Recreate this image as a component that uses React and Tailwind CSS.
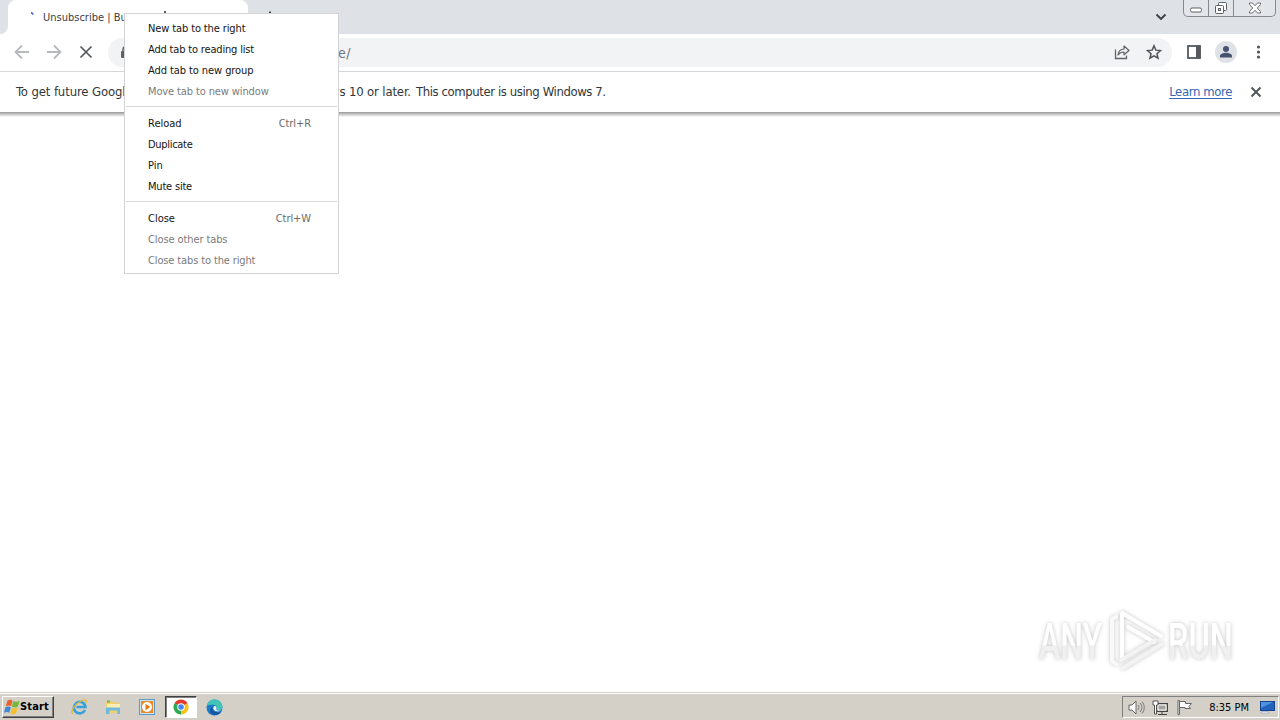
import React from 'react';

const MENU = [
  [
    { label: 'New tab to the right', cls: 'tracking-[-0.12px]' },
    { label: 'Add tab to reading list', cls: 'tracking-[-0.17px]' },
    { label: 'Add tab to new group', cls: 'tracking-[-0.08px]' },
    { label: 'Move tab to new window', cls: 'tracking-[-0.12px]', disabled: true },
  ],
  [
    { label: 'Reload', keys: 'Ctrl+R' },
    { label: 'Duplicate', cls: 'tracking-[-0.3px]' },
    { label: 'Pin' },
    { label: 'Mute site', cls: 'tracking-[-0.2px]' },
  ],
  [
    { label: 'Close', keys: 'Ctrl+W' },
    { label: 'Close other tabs', cls: 'tracking-[-0.1px]', disabled: true },
    { label: 'Close tabs to the right', cls: 'tracking-[-0.13px]', disabled: true },
  ],
];

function Icon({ children, size = 16, className = '' }) {
  return (
    <svg width={size} height={size} viewBox={`0 0 ${size} ${size}`} fill="none" className={`block shrink-0 ${className}`}>
      {children}
    </svg>
  );
}

function TabStrip() {
  return (
    <div className="flex h-[34px] bg-[#dee1e6]">
      <div className="flex h-full w-2 items-end">
        <svg width="8" height="8" className="block"><path d="M8 0v8H0a8 8 0 0 0 8-8z" fill="#fff" /></svg>
      </div>
      <div className="flex h-full w-[240px] items-center rounded-t-[8px] bg-white pl-[15px]">
        <svg width="16" height="16" className="block">
          <path d="M8 3.500a5 5 0 0 1 2.200 2" stroke="#4a62c8" strokeWidth="1.600" fill="none" />
        </svg>
        <span className="ml-1 w-[84px] shrink-0 pt-px text-[11px] leading-4 whitespace-nowrap text-[#3c4043]">Unsubscribe | Bu</span>
        <span className="-mt-[10px] ml-[37px] h-[2px] w-[2px] bg-[#5a5e62]" />
      </div>
      <div className="flex h-full w-2 items-end">
        <svg width="8" height="8" className="block"><path d="M0 0v8h8a8 8 0 0 1-8-8z" fill="#fff" /></svg>
      </div>
      <div className="flex h-full w-7 items-center justify-center">
        <svg width="14" height="14" className="block"><path d="M7 1.500v11M1.500 7h11" stroke="#3c4043" strokeWidth="2" /></svg>
      </div>
      <div className="ml-auto flex">
        <svg width="12" height="8" className="mt-[13px] mr-[16px] block">
          <path d="M1.500 1.500L6 6l4.500-4.500" stroke="#3c4043" strokeWidth="1.900" fill="none" />
        </svg>
        <div className="mr-[4px] flex h-[17px] rounded-b-[5px] border border-t-0 border-[#85888d] bg-[#e2e5e9]">
          <div className="flex w-[25px] items-center justify-center border-r border-[#85888d]">
            <svg width="14" height="16" className="block"><rect x="1.500" y="8" width="11" height="4" rx="1.500" fill="#fff" stroke="#5b5f66" /></svg>
          </div>
          <div className="flex w-[25px] items-center justify-center border-r border-[#85888d]">
            <svg width="14" height="16" className="block">
              <rect x="4.500" y="2.500" width="8" height="8" rx="1" fill="#fff" stroke="#5b5f66" />
              <rect x="1.500" y="5.500" width="8" height="8" rx="1" fill="#fff" stroke="#5b5f66" />
              <rect x="4.500" y="8.500" width="2" height="2" fill="#dee1e6" stroke="#5b5f66" />
            </svg>
          </div>
          <div className="flex w-[41px] items-center justify-center">
            <svg width="14" height="16" className="block">
              <path d="M1.500 3h3L7 5.700 9.500 3h3v1.500L9.300 8l3.200 3.500V13h-3L7 10.300 4.500 13h-3v-1.500L4.700 8 1.500 4.500z" fill="#fff" stroke="#5b5f66" strokeWidth=".9" />
            </svg>
          </div>
        </div>
      </div>
    </div>
  );
}

function Toolbar() {
  return (
    <div className="flex h-[38px] items-center border-b border-[#d5d7da] bg-white pb-px pl-[14px]">
      <Icon><path d="M15 8H2M8 1.500L1.500 8 8 14.500" stroke="#b7b9bc" strokeWidth="1.800" /></Icon>
      <Icon className="ml-4"><path d="M1 8h13M8 1.500L14.500 8 8 14.500" stroke="#b7b9bc" strokeWidth="1.800" /></Icon>
      <Icon className="ml-4"><path d="M2.500 2.500l11 11M13.500 2.500l-11 11" stroke="#55585c" strokeWidth="1.700" /></Icon>
      <div className="ml-[14px] flex h-[29px] w-[1064px] items-center rounded-full bg-[#f1f3f4] pl-[12px]">
        <Icon size={12}><rect x="1" y="5" width="10" height="7" rx="1" fill="#5f6368" /><path d="M3 6V3.500a3 3 0 0 1 6 0V6" stroke="#5f6368" strokeWidth="1.500" /></Icon>
        <span className="ml-[206px] pt-px text-[14px] leading-4 tracking-[0.4px] text-[#70757a]">e/</span>
        <Icon className="ml-auto">
          <path d="M1.500 5.500v9h11v-3" stroke="#5f6368" strokeWidth="1.300" />
          <path d="M4 11c.5-4 2.500-5.800 6-6V2l5 4.500-5 4.300V8C7.500 8 5.500 9 4 11z" stroke="#5f6368" strokeWidth="1.200" strokeLinejoin="round" />
        </Icon>
        <Icon className="mr-[10px] ml-4">
          <path d="M8 1.800l1.850 4.350 4.700.4-3.570 3.100 1.070 4.600L8 11.800l-4.050 2.450 1.070-4.600-3.570-3.100 4.700-.4z" stroke="#505459" strokeWidth="1.500" />
        </Icon>
      </div>
      <Icon className="ml-[14px]">
        <rect x="2" y="2" width="12" height="12" stroke="#55585c" strokeWidth="1.800" />
        <path d="M10 1.500H14.500v13H10z" fill="#55585c" />
      </Icon>
      <Icon size={22} className="ml-[13px]">
        <circle cx="11" cy="11" r="11" fill="#dee1e6" />
        <circle cx="11" cy="8" r="3" fill="#47536e" />
        <path d="M5 16.500v-1.700c0-2 4-3 6-3s6 1 6 3v1.700z" fill="#47536e" />
      </Icon>
      <Icon className="ml-[14px]">
        <circle cx="7.500" cy="3" r="1.600" fill="#505459" />
        <circle cx="7.500" cy="8" r="1.600" fill="#505459" />
        <circle cx="7.500" cy="13" r="1.600" fill="#505459" />
      </Icon>
    </div>
  );
}

function InfoBar() {
  return (
    <>
      <div className="flex h-[40px] items-center bg-white pl-4 text-[13px] leading-4 text-[#333639]">
        <span className="w-[110px] whitespace-nowrap tracking-[-0.12px]">To get future Googl</span>
        <span className="ml-[204px] w-[86px] whitespace-nowrap tracking-[-0.15px]">ws 10 or later.</span>
        <span className="whitespace-nowrap tracking-[-0.41px]">This computer is using Windows 7.</span>
        <span className="ml-auto whitespace-nowrap tracking-[-0.38px] text-[#3367b5] underline underline-offset-2">Learn more</span>
        <svg width="12" height="12" className="mr-[18px] ml-[18px] block">
          <path d="M1.500 1.500l9 9M10.500 1.500l-9 9" stroke="#505459" strokeWidth="1.900" />
        </svg>
      </div>
      <div className="h-[5px] bg-gradient-to-b from-[#999] to-white" />
    </>
  );
}

function ContextMenu() {
  return (
    <div className="absolute top-[13px] left-[124px] h-[261px] w-[215px] border border-[#d3d3d3] bg-white pt-1 text-[11px]">
      {MENU.map((group, i) => (
        <div key={i}>
          {i > 0 && <div className="h-[11px] px-px pt-1"><div className="h-px bg-[#d8d8d8]" /></div>}
          {group.map(item => (
            <div
              key={item.label}
              className={`flex h-[21px] items-center justify-between pt-[2px] pr-[27px] pl-[23px] whitespace-nowrap ${
                item.disabled ? 'text-[#7b7b7b]' : 'text-[#141414]'
              }`}
            >
              <span className={item.cls}>{item.label}</span>
              {item.keys && <span className="tracking-[-0.08px] text-[#6a6a6a]">{item.keys}</span>}
            </div>
          ))}
        </div>
      ))}
    </div>
  );
}

function Watermark() {
  return (
    <svg width="210" height="76" viewBox="0 0 210 76" className="absolute top-[602px] left-[1030px] [filter:drop-shadow(0_0_2px_#c4c4c4)]">
      <defs>
        <linearGradient id="wm" x1="0" y1="0" x2="0" y2="1">
          <stop offset=".55" stopColor="#fff" />
          <stop offset=".58" stopColor="#f0f0f0" />
        </linearGradient>
      </defs>
      <g fill="url(#wm)" fontFamily="Roboto, sans-serif" fontWeight="500" fontSize="50">
        <text transform="translate(9 57) scale(.64 1)">ANY</text>
        <text transform="translate(138 57) scale(.65 1)">RUN</text>
      </g>
      <g fill="none" strokeWidth="4" strokeLinejoin="round" strokeLinecap="round">
        <path d="M86 15l-4 2v42l4 3" stroke="#f9f9f9" />
        <path d="M92 56V11l39 23M98 25l26 15" stroke="#fff" />
        <path d="M91 58l34-20M93 66l39-24" stroke="#f3f3f3" />
      </g>
    </svg>
  );
}

function WindowsFlag() {
  return (
    <svg width="17" height="16" viewBox="0 0 17 16" className="block shrink-0">
      <path d="M3.500 1.500c2-1.200 3.500-1 5 0L7.100 7.200c-1.500-1-3.200-1-5.400 0z" fill="#e8622c" />
      <path d="M9.300 2c2 1 3.500 1 6.200 0l-1.600 5.700c-2 1-4 .8-6 0z" fill="#76b73c" />
      <path d="M1.400 8.200c2-1.100 3.700-1 5.400 0l-1.500 5.600c-1.500-1-3.200-1-5.300 0z" fill="#3f88d8" />
      <path d="M7.700 8.700c1.800.9 3.900.9 5.900 0L12 14.500c-2 1-4 .8-5.800 0z" fill="#f6c02c" />
    </svg>
  );
}

function Taskbar() {
  return (
    <div className="flex h-[28px] items-start border-t border-[#d4d0c8] bg-[#d4d0c8] shadow-[inset_0_1px_0_#fff]">
      <div className="mt-[3px] ml-[2px] flex h-[22px] w-[52px] items-center border border-t-white border-r-[#404040] border-b-[#404040] border-l-white pl-px shadow-[inset_-1px_-1px_0_#808080]">
        <WindowsFlag />
        <span className="-ml-px text-[11px] leading-4 font-bold tracking-[0.15px] text-black">Start</span>
      </div>
      <div className="mt-[3px] ml-[16px] flex h-[22px] items-center">
        <Icon size={18}>
          <path d="M15 12A5.800 5.800 0 1 1 15.500 9H6.500" stroke="#35a0dc" strokeWidth="2.600" />
          <path d="M3 16C-1 14 6 5 12 2.500c4-1.500 5 0 4 2.500" stroke="#e5b62d" strokeWidth="1.300" />
        </Icon>
        <Icon size={18} className="ml-4">
          <path d="M2 3h6l1 1.500h7V15H2z" fill="#efd06c" />
          <path d="M3 6h13v4H3z" fill="#fbedb2" />
          <path d="M3 2.500h3v2H3z" fill="#65b764" />
          <path d="M2 9.500h14V16h-2.500v-3.500h-8V16H2z" fill="#6fb9dc" />
        </Icon>
        <Icon size={18} className="ml-4">
          <rect x="1.500" y="1.500" width="15" height="15" fill="#cce4f5" stroke="#5a9bcc" />
          <rect x="3" y="3" width="12" height="12" fill="#f08a20" />
          <circle cx="9" cy="9" r="5" fill="#fff" />
          <path d="M7.500 5.800v6.400L12.300 9z" fill="#e8780c" />
        </Icon>
      </div>
      <div className="mt-[3px] ml-[9px] flex h-[22px] w-[32px] items-center justify-center border border-t-[#404040] border-r-white border-b-white border-l-[#404040] bg-white shadow-[inset_1px_1px_0_#808080]">
        <Icon>
          <circle cx="8" cy="8" r="7.500" fill="#fff" />
          <path d="M8 8L1.500 4.250A7.500 7.500 0 0 1 14.500 4.250z" fill="#e33b2e" />
          <path d="M8 8l6.500-3.750A7.500 7.500 0 0 1 8 15.500z" fill="#fbc116" />
          <path d="M8 8v7.500A7.500 7.500 0 0 1 1.500 4.250z" fill="#2da94f" />
          <circle cx="8" cy="8" r="3.800" fill="#fff" />
          <circle cx="8" cy="8" r="2.800" fill="#4285f4" />
        </Icon>
      </div>
      <div className="mt-[3px] ml-[9px] flex h-[22px] items-center">
        <Icon size={17}>
          <circle cx="8.500" cy="8.500" r="8" fill="#1c79c9" />
          <path d="M.8 7C2 2.500 5-.2 9.500.6c5 .8 7.500 5 6.800 8.400-.5 2.200-3 3-5.800 2.200 1.500-2.700-.2-5.200-3.500-5.400C4.500 5.600 2 6 .8 7z" fill="#42c5b7" />
          <path d="M6.500 8c-.5 4 3 6.500 8.500 5-3 4-9 4-10.500 0-.8-2.200.2-4.200 2-5z" fill="#12559f" />
          <path d="M8 7c2-.5 3.300 1.500 2.300 3.500 1 1.500 3.500 1.500 5 .5-1.500 2.200-8.300 2-8-2z" fill="#e8f4f6" />
        </Icon>
      </div>
      <div className="mt-[3px] mr-px ml-auto flex h-[22px] w-[157px] items-center border border-t-[#808080] border-r-white border-b-white border-l-[#808080] pl-[5px]">
        <Icon size={17}>
          <path d="M1 6h3l4-4v13l-4-4H1z" fill="#fff" stroke="#666" />
          <path d="M10 6c1.200 1.500 1.200 3.500 0 5M12 4c2.500 2.500 2.500 6.500 0 9M14 2.500c3 3.500 3 8.500 0 12" stroke="#777" />
        </Icon>
        <Icon size={17} className="ml-[7px]">
          <rect x="4.500" y="4.500" width="11" height="8" fill="#a3a29e" stroke="#444" />
          <path d="M6 6h8v5H6z" stroke="#fff" />
          <path d="M6 15.500h9M10 13v2" stroke="#444" />
          <path d="M1 2h5v4H4.500v9h-2V6H1z" fill="#fff" stroke="#555" />
        </Icon>
        <Icon size={17} className="ml-[7px]">
          <path d="M2 1.500h1.500v14H2z" fill="#fff" stroke="#666" />
          <path d="M3.500 2.500h6v2h6l-2.500 3 1.500 2H9v-1H3.500z" fill="#fff" stroke="#666" />
        </Icon>
        <span className="ml-auto pt-px text-[11px] leading-4 whitespace-nowrap text-black">8:35 PM</span>
        <Icon size={17} className="mr-[2px] ml-[10px]">
          <rect x="1.500" y="2.500" width="14" height="9" fill="#2362bd" stroke="#16458e" />
          <path d="M2 3h12L2 9z" fill="#4c93e0" />
          <path d="M3 12.500h6l1 1.500H2z" fill="#eef2f7" stroke="#8fa6c4" strokeWidth=".6" />
        </Icon>
      </div>
    </div>
  );
}

export default function App() {
  return (
    <div className="relative flex h-[720px] w-[1280px] flex-col overflow-hidden bg-white font-['DejaVu_Sans_Condensed','DejaVu_Sans',sans-serif]">
      <TabStrip />
      <Toolbar />
      <InfoBar />
      <div className="flex-1 bg-white" />
      <Taskbar />
      <Watermark />
      <ContextMenu />
    </div>
  );
}
